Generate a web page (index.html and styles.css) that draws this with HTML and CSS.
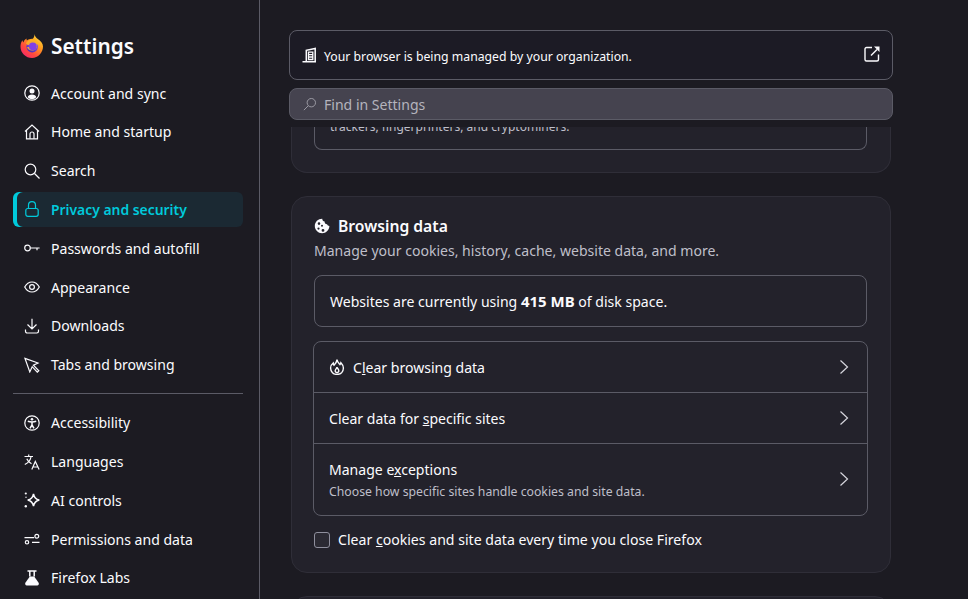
FILE: index.html
```html
<!DOCTYPE html>
<html lang="en">
<head>
<meta charset="utf-8">
<title>Settings</title>
<link rel="stylesheet" href="styles.css">
</head>
<body>
<div class="app">
  <aside class="sidebar">
    <div class="brand">
      <svg class="logo" viewBox="0 0 24 24" width="24" height="24">
        <defs>
          <linearGradient id="fx" x1="0.85" y1="0.05" x2="0.15" y2="0.95">
            <stop offset="0" stop-color="#ffe03d"/><stop offset="0.35" stop-color="#ff9a1f"/><stop offset="0.7" stop-color="#ff4a3d"/><stop offset="1" stop-color="#f5276c"/>
          </linearGradient>
          <linearGradient id="fy" x1="0.8" y1="0" x2="0.2" y2="1">
            <stop offset="0" stop-color="#9059ff"/><stop offset="1" stop-color="#4a2bb0"/>
          </linearGradient>
        </defs>
        <path fill="url(#fx)" d="M14.500 0c.2 2.300 1.500 3.600 3.300 5 2.700 2 5.200 4.300 5.200 7.500C23 18.600 18.100 24 12 24S.5 18.900.5 12.700c0-2.500.6-4.700 1.900-6.500.2 1 .5 1.700 1.100 2.200.5-1.800 1.600-3 3.100-3.800-.2.800-.1 1.300.3 1.800 1.300-1.100 3.600-1.900 6-1.700C14 3.400 14.600 1.900 14.500 0z"/>
        <circle cx="12.200" cy="12.600" r="5.800" fill="url(#fy)"/>
        <path fill="#ffb21f" d="M18.700 9.500C17.500 6.800 15 5.500 12.300 5.600 9.500 5.700 7.300 7 6 9.200l1.600 1.900 4.400.3-.6 1.400-4.300.2C7.500 15 9.500 16.500 12 16.500c3 0 5-2 5-4.500 0-.8-.2-1.500-.5-2.100.9.300 1.600.7 2.200 1.400z" opacity="0.9"/>
        <circle cx="12.800" cy="12.300" r="3.900" fill="#8040e8"/>
      </svg>
      <h1 class="brand-title">Settings</h1>
    </div>
    <nav class="nav">
      <a class="nav-item"><svg class="ico" viewBox="0 0 16 16"><circle cx="8" cy="8" r="7.200"/><circle class="fill" cx="8" cy="6" r="2.500"/><path class="fill" d="M3.700 12.300c.5-1.900 2-2.800 4.300-2.800s3.800.9 4.300 2.800C11.200 13.500 9.700 14.200 8 14.200s-3.200-.7-4.300-1.900z"/></svg><span>Account and sync</span></a>
      <a class="nav-item"><svg class="ico" viewBox="0 0 16 16"><path d="M1 7.500 8 1l7 6.500M2.500 6.500v8.300h11V6.500"/><path d="M6 14.800V10a2 2 0 0 1 4 0v4.800"/></svg><span>Home and startup</span></a>
      <a class="nav-item"><svg class="ico" viewBox="0 0 16 16"><circle cx="6.500" cy="6.500" r="5.300"/><path d="m10.500 10.500 5 5"/></svg><span>Search</span></a>
      <a class="nav-item active"><svg class="ico" viewBox="0 0 16 16"><rect x="1.800" y="7.500" width="12.400" height="7.800" rx="2"/><path d="M4.500 7.500V4.200a3.500 3.500 0 0 1 7 0v3.300"/></svg><span>Privacy and security</span></a>
      <a class="nav-item"><svg class="ico" viewBox="0 0 16 16"><circle cx="3.500" cy="8" r="2.800"/><path d="M6.300 8h9.300M13 8v2.200"/></svg><span>Passwords and autofill</span></a>
      <a class="nav-item"><svg class="ico" viewBox="0 0 16 16"><path d="M.7 8C2.500 4.700 5 3 8 3s5.500 1.700 7.300 5c-1.800 3.300-4.300 5-7.300 5S2.500 11.300.7 8z"/><circle cx="8" cy="8" r="2.400"/></svg><span>Appearance</span></a>
      <a class="nav-item"><svg class="ico" viewBox="0 0 16 16"><path d="M8 .8v10M3.500 6.500 8 11l4.500-4.500M1.500 11.500v1.800a1.700 1.700 0 0 0 1.700 1.700h9.600a1.700 1.700 0 0 0 1.700-1.700v-1.800"/></svg><span>Downloads</span></a>
      <a class="nav-item"><svg class="ico" viewBox="0 0 16 16"><path d="M1 1.200 14 5.800 9.400 8 14.800 13.600 13.300 15 8.200 9.500 5.800 14.700z" transform="translate(0 .2)"/></svg><span>Tabs and browsing</span></a>
      <hr class="nav-divider">
      <a class="nav-item"><svg class="ico" viewBox="0 0 16 16"><circle cx="8" cy="8" r="7.200"/><circle class="fill" cx="8" cy="4.200" r="1.300"/><path stroke-width="1.500" d="M3.800 6.300c2.800.8 5.600.8 8.400 0M8 7v3M8 10l-2 3.300M8 10l2 3.300"/></svg><span>Accessibility</span></a>
      <a class="nav-item"><svg class="ico" viewBox="0 0 16 16"><path d="M.5 2.500h8.500M4.700.5v2M7 3c-.7 3.500-3 6-6.200 7.500M2.800 4.800c.8 2.200 2.500 3.800 4.700 5"/><path d="M7.800 15.500 11.300 7.500l3.800 8M9 13h4.800"/></svg><span>Languages</span></a>
      <a class="nav-item"><svg class="ico" viewBox="0 0 16 16"><path stroke-width="1.500" d="M9.500 1.800c.6 3.400 2.100 5.400 5.800 6.200-3.700.8-5.200 2.800-5.800 6.200-.6-3.400-2.100-5.400-5.800-6.200 3.700-.8 5.200-2.800 5.800-6.200z"/><circle class="fill" cx="1.800" cy="1.500" r="1.100"/><circle class="fill" cx="2" cy="5.300" r=".7"/><circle class="fill" cx="1.800" cy="14.300" r="1.200"/></svg><span>AI controls</span></a>
      <a class="nav-item"><svg class="ico" viewBox="0 0 16 16"><path d="M.5 6.700h9.500M8 11.300h7.500"/><circle cx="12.800" cy="5.300" r="1.900"/><circle cx="3" cy="11.300" r="1.700"/></svg><span>Permissions and data</span></a>
      <a class="nav-item"><svg class="ico" viewBox="0 0 16 16"><path stroke-width="1.500" d="M3.500 1h9M5.800 1v5.500M10.200 1v5.500"/><path class="fill" d="M5.800 6.500h4.400l4.400 6.300c.7 1.200 0 2.700-1.400 2.700H2.800c-1.400 0-2.100-1.500-1.400-2.700z"/></svg><span>Firefox Labs</span></a>
    </nav>
  </aside>

  <main class="main">
    <header class="top">
      <div class="managed">
        <svg class="ico bld" viewBox="0 0 16 16"><path stroke-width="1.500" d="M4.300 14.500V3.300L13.200 1.500v13M.5 14.800h13.500"/><path stroke-width="1.300" d="M6.500 5.200h4.300v7.300H6.500zM6.500 7.700h4.300M6.500 10h4.300"/></svg>
        <span class="managed-text">Your browser is being managed by your organization.</span>
        <svg class="ico ext" viewBox="0 0 16 16"><path stroke-width="1.400" d="M8 1.500H2.500a1.500 1.500 0 0 0-1.500 1.500v10.500A1.500 1.500 0 0 0 2.500 15H13a1.500 1.500 0 0 0 1.500-1.500V8.500"/><path stroke-width="1.400" d="M7 9.500 13 3.500"/><path class="fill" d="M10 .5h5.500V6z"/></svg>
      </div>
      <div class="find">
        <svg class="find-ico" viewBox="0 0 16 16"><circle cx="9.500" cy="6.500" r="4.800"/><path d="m6 10-5 5"/></svg>
        <span>Find in Settings</span>
      </div>
    </header>

    <div class="content">
      <section class="card clipped">
        <div class="inner-box clip-box"><span class="clip-text">trackers, fingerprinters, and cryptominers.</span></div>
      </section>

      <section class="card">
        <h2 class="card-title">
          <svg class="ico" viewBox="0 0 16 16"><path class="fill" fill-rule="evenodd" d="M8.200.8c.1 1.500 1 2.600 2.400 2.800-.1 1.600 1 2.800 2.500 2.700.3 1 1.200 1.700 2.300 1.700-.1 4-3.300 7.200-7.300 7.200S.8 12 .8 8 4.100.8 8.200.8zM5 4.300a1.300 1.300 0 1 0 0 2.600 1.300 1.300 0 0 0 0-2.600zM8 6.800a1 1 0 1 0 0 2 1 1 0 0 0 0-2zM4.500 9.500a1.100 1.100 0 1 0 0 2.200 1.100 1.100 0 0 0 0-2.200zM9 11a1.400 1.400 0 1 0 0 2.800A1.400 1.400 0 0 0 9 11z"/></svg>
          <span>Browsing data</span>
        </h2>
        <p class="card-desc">Manage your cookies, history, cache, website data, and more.</p>
        <div class="inner-box usage">Websites are currently using <strong>415 MB</strong> of disk space.</div>
        <div class="rows">
          <a class="row">
            <svg class="ico" viewBox="0 0 16 16"><path stroke-width="1.400" d="M8 .6c.4 2.400 1.700 3.500 3 5 .5-.5.800-1.100.9-1.900 1.500 1.500 2.500 3.400 2.500 5.400 0 3.900-2.800 6.300-6.400 6.300S1.600 12.900 1.600 9.100c0-2.100 1-3.900 2.600-5.100 0 .9.200 1.600.8 2.200C6.400 4.900 7.700 3 8 .6z"/><path stroke-width="1.400" d="M8 8.200c.2 1.100 1.800 1.900 1.800 3.500A1.900 1.900 0 0 1 8 13.700a1.900 1.900 0 0 1-1.800-2c0-1.400 1.500-2.100 1.800-3.500z"/></svg>
            <span class="row-label">C<u>l</u>ear browsing data</span>
            <svg class="chev" viewBox="0 0 16 16"><path d="m4.500 1.500 7 6.500-7 6.500"/></svg>
          </a>
          <a class="row">
            <span class="row-label">Clear data for <u>s</u>pecific sites</span>
            <svg class="chev" viewBox="0 0 16 16"><path d="m4.500 1.500 7 6.500-7 6.500"/></svg>
          </a>
          <a class="row tall">
            <span class="row-stack">
              <span class="row-label">Manage e<u>x</u>ceptions</span>
              <span class="row-desc">Choose how specific sites handle cookies and site data.</span>
            </span>
            <svg class="chev" viewBox="0 0 16 16"><path d="m4.500 1.500 7 6.500-7 6.500"/></svg>
          </a>
        </div>
        <label class="check">
          <span class="box"></span>
          <span>Clear <u>c</u>ookies and site data every time you close Firefox</span>
        </label>
      </section>

      <section class="card next"></section>
    </div>
  </main>
</div>
</body>
</html>
```
FILE: styles.css
```css
* { box-sizing: border-box; }
html, body { height: 100%; }
body {
  margin: 0;
  background: #1c1b22;
  color: #fbfbfe;
  font-family: "Noto Sans", sans-serif;
  font-size: 14.05px;
  overflow: hidden;
}
.app { display: flex; height: 599px; overflow: hidden; }

.sidebar {
  flex: 0 0 260px;
  border-right: 1px solid #5b5b66;
  padding: 31px 16px 0 13px;
}
.brand { display: flex; align-items: center; gap: 7px; height: 30px; padding-left: 7px; }
.logo { flex: none; }
.brand-title { margin: 0; font-size: 20.8px; font-weight: 600; line-height: 30px; }
.nav { display: flex; flex-direction: column; gap: 3px; margin-top: 14.2px; }
.nav-item {
  display: flex; align-items: center; gap: 11px;
  height: 35.8px; padding-left: 11px;
  border-radius: 6px;
}
.nav-item.active {
  background: #1b2933;
  color: #00cadb;
  font-weight: 600;
  box-shadow: inset 4px 0 0 #00cadb;
}
.nav-item.active span { font-size: 13.9px; }
.nav-divider { border: 0; border-top: 1px solid #5b5b66; width: 100%; margin: 7.3px 0 8px; }

.ico { width: 16px; height: 16px; flex: none; fill: none; stroke: currentColor; stroke-width: 1.2; }
.ico .fill { fill: currentColor; stroke: none; }

.main { flex: 1; min-width: 0; padding-left: 29px; display: flex; flex-direction: column; }
.top { width: 604px; padding-top: 30px; display: flex; flex-direction: column; gap: 8px; }
.managed {
  display: flex; align-items: center; gap: 6px;
  height: 50px; padding: 2px 12px 0;
  background: #1c1b25;
  border: 1px solid #5b5b66; border-radius: 8px;
  font-size: 12.25px;
}
.managed-text { flex: 1; }
.bld { margin-top: -3px; }
.ext { margin-top: -4px; }
.find {
  display: flex; align-items: center; gap: 6px;
  height: 32px; padding: 0 12px;
  background: #45434f;
  border: 1px solid #5b5b66; border-radius: 8px;
  color: #b4b3bd;
}
.find-ico { width: 16px; height: 16px; fill: none; stroke: #9d9ca6; stroke-width: 1.100; flex: none; padding: 1px; }

.content { margin-top: 7px; display: flex; flex-direction: column; gap: 23px; padding-left: 2px; }
.card {
  width: 600px;
  flex: none;
  background: #23222b;
  border: 1px solid #2f2e38;
  border-radius: 16px;
  padding: 0 23px 0 22px;
}
.clipped {
  height: 46px; overflow: hidden;
  border-top: 0; border-top-left-radius: 0; border-top-right-radius: 0;
  display: flex; flex-direction: column; justify-content: flex-end;
  padding-bottom: 22px;
}
.inner-box { border: 1px solid #5b5b66; border-radius: 8px; }
.clip-box {
  height: 60px; flex: none; padding: 0 15px 13px;
  display: flex; align-items: flex-end;
  border-top: 0;
  font-size: 12px; line-height: 18px; color: #bfbfc9;
}
.clip-text { display: block; }
.card-title {
  margin: 0; padding-top: 17px;
  display: flex; align-items: center; gap: 8px;
  font-size: 15.7px; font-weight: 600; line-height: 24px;
}
.card-desc { margin: 1px 0 0; color: #bfbfc9; line-height: 24px; }
.usage {
  margin-top: 12px; height: 52px; padding: 0 15px;
  line-height: 51px;
}
.usage strong { font-weight: 700; font-size: 15px; }
.rows {
  margin: 14px -1px 0;
  border: 1px solid #5b5b66; border-radius: 8px;
  display: flex; flex-direction: column;
}
.row {
  display: flex; align-items: center; gap: 8px;
  height: 51px; padding: 0 15px;
  border-bottom: 1px solid #5b5b66;
}
.row.tall { height: 71px; border-bottom: 0; }
.row.tall .chev { margin-bottom: 1px; }
.row-stack { display: flex; flex-direction: column; gap: 3px; padding-top: 1px; }
.row-label { flex: 1; }
.row-desc { font-size: 12.25px; color: #bfbfc9; }
.row-stack .row-label { line-height: 20px; }
.chev { margin-left: auto; width: 16px; height: 16px; fill: none; stroke: #d6d6dd; stroke-width: 1.200; flex: none; }
.check {
  display: flex; align-items: center; gap: 8px;
  margin: 15px 0 23px; line-height: 18px;
  font-size: 14.1px;
}
.box {
  width: 16px; height: 16px; flex: none;
  border: 1px solid #8f8f9d; border-radius: 3px; background: #2b2a33;
}
.next { height: 60px; }
```
